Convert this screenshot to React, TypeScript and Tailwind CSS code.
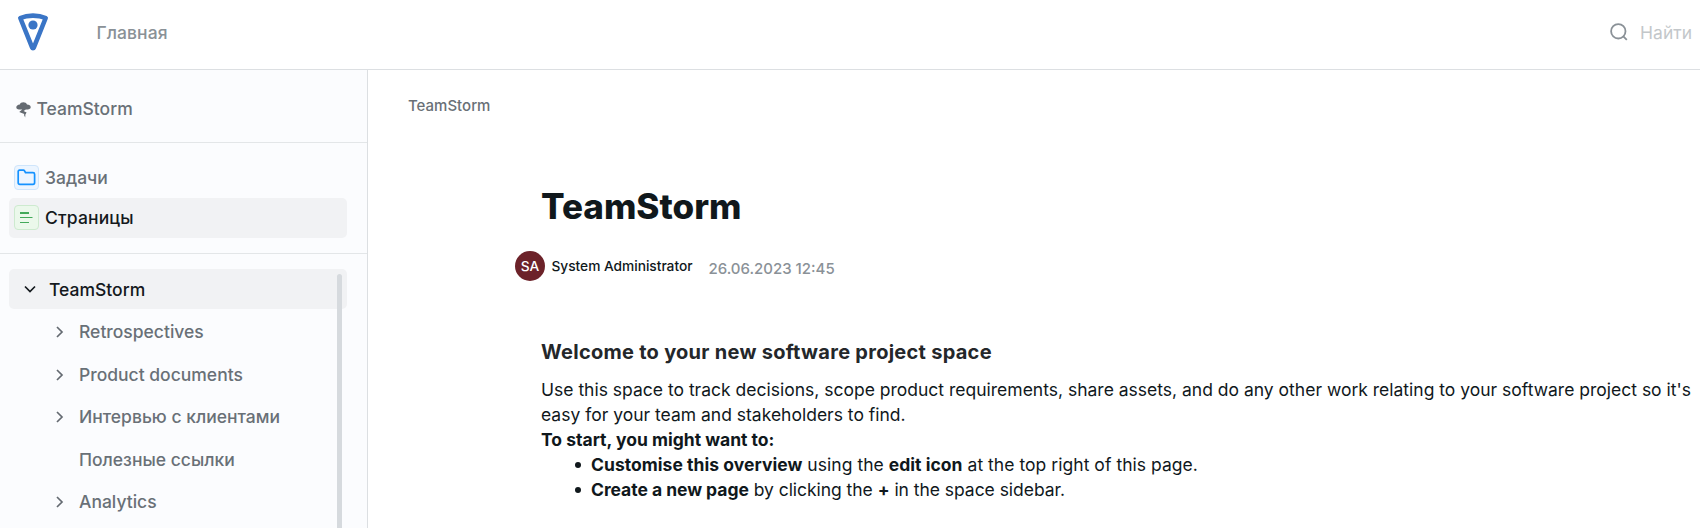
import React from 'react';

const tree = [
  { label: 'Retrospectives', open: true },
  { label: 'Product documents', open: true },
  { label: 'Интервью с клиентами', open: true },
  { label: 'Полезные ссылки', open: false },
  { label: 'Analytics', open: true },
];

function Logo() {
  return (
    <svg width="32" height="40" viewBox="0 0 32 40" fill="none">
      <path d="M3.300 7C10.800 3.800 21.200 3.800 28.700 7L16.800 36.700C16.500 37.500 15.500 37.500 15.200 36.700Z" stroke="#3a75c6" strokeWidth="4.600" strokeLinejoin="round" />
      <circle cx="16" cy="14" r="4.600" fill="#3a75c6" />
    </svg>
  );
}

function StormIcon() {
  return (
    <svg className="mt-[2px]" width="15" height="16" viewBox="0 0 15 16" fill="#646a71">
      <path d="M3.800 2.600C4.200 1 5.600 .3 7.300 .3S10.500 1 11 2.600C13.200 2.700 14.700 3.800 14.700 5.200S13.400 7.400 11.700 7.400H9.800L7.600 9 10.600 10.400 9.400 12.400 9.200 15.600 8 13 8.300 12 3.200 10 6.300 7.400H3C1.300 7.400 .300 6.600 .300 5.300S1.700 2.900 3.800 2.600Z" />
    </svg>
  );
}

function Chevron({ down = false }: { down?: boolean }) {
  return down ? (
    <svg width="12" height="12" viewBox="0 0 12 12" fill="none" stroke="#14191d" strokeWidth="1.7">
      <path d="M1 3.500L6 8.500L11 3.500" />
    </svg>
  ) : (
    <svg width="12" height="12" viewBox="0 0 12 12" fill="none" stroke="#646a71" strokeWidth="1.7">
      <path d="M4 1L9 6L4 11" />
    </svg>
  );
}

function Sidebar() {
  return (
    <aside className="flex w-[368px] shrink-0 flex-col border-r border-[#dcdfe2] bg-[#fbfcfe] text-[17.5px] leading-[26px] font-medium text-[#697077]">
      <div className="flex h-[73px] shrink-0 items-center gap-[5.500px] border-b border-[#e3e6e8] pt-[5px] pl-[16px]">
        <StormIcon />
        <span className="pt-px">TeamStorm</span>
      </div>
      <nav className="flex h-[111px] shrink-0 flex-col border-b border-[#e3e6e8] pt-[15px] pl-[9px]">
        <div className="flex h-[40px] w-[338px] items-start gap-[6px] pt-[7px] pl-[5px]">
          <span className="flex size-[25px] items-center justify-center rounded-[4px] border border-[#cfe5fb] bg-[#ecf5ff]">
            <svg width="19" height="17" viewBox="0 0 19 17" fill="none" stroke="#1592ff" strokeWidth="1.700" strokeLinejoin="round">
              <path d="M1.200 2.500C1.200 1.700 1.700 1.200 2.500 1.200H6.400C7 1.200 7.300 1.500 7.600 2L8.600 3.700H16C17 3.700 17.600 4.200 17.600 5.200V13.500C17.600 14.700 17 15.300 16 15.300H2.800C1.700 15.300 1.200 14.700 1.200 13.700Z" />
            </svg>
          </span>
          <span>Задачи</span>
        </div>
        <div className="flex h-[40px] w-[338px] items-start gap-[6px] rounded-[5px] bg-[#f1f2f4] pt-[7px] pl-[5px] text-[#14191d]">
          <span className="flex size-[25px] items-center justify-center rounded-[4px] border border-[#cdeacf] bg-[#ebf8eb]">
            <svg width="13" height="11" viewBox="0 0 13 11" fill="#43a95a">
              <path d="M0 0H9V2H0ZM0 5H12.500V6H0ZM0 10H9V11H0Z" />
            </svg>
          </span>
          <span className="tracking-[0.15px]">Страницы</span>
        </div>
      </nav>
      <div className="relative flex flex-1 flex-col pt-[15px] pl-[9px]">
        <div className="flex h-[40px] w-[338px] shrink-0 items-center gap-[13px] rounded-[5px] bg-[#f1f2f4] pl-[15px] text-[#14191d]">
          <Chevron down />
          <span className="pt-px">TeamStorm</span>
        </div>
        <div className="flex flex-col pt-[2px]">
          {tree.map((item) => (
            <div key={item.label} className="flex h-[42.500px] items-center gap-[14px] pl-[44px]">
              <span className="flex w-[12px]">{item.open && <Chevron />}</span>
              <span>{item.label}</span>
            </div>
          ))}
        </div>
        <div className="absolute top-[20px] bottom-[-10px] left-[337px] w-[5px] rounded-full bg-[#d6dade]" />
      </div>
    </aside>
  );
}

function Bullet() {
  return <span className="mt-[10px] mr-[8px] size-[6px] shrink-0 rounded-full bg-[#10181c]" />;
}

function Article() {
  return (
    <main className="flex min-w-0 flex-1 flex-col bg-white text-[17.5px] leading-[25px] text-[#10181c]">
      <div className="pt-[24px] pl-[40px] text-[15px] leading-[24px] font-medium text-[#697077]">TeamStorm</div>
      <h1 className="mt-[66px] ml-[173px] text-[35px] leading-[44px] font-extrabold">TeamStorm</h1>
      <div className="mt-[23px] ml-[147px] flex h-[30px] items-center text-[13.75px] font-medium">
        <span className="flex size-[30px] items-center justify-center rounded-full bg-[#6c2229] text-white">SA</span>
        <span className="ml-[6.500px] tracking-[-0.03px]">System Administrator</span>
        <span className="ml-[16px] pt-[5px] text-[15px] text-[#8a9197]">26.06.2023 12:45</span>
      </div>
      <div className="ml-[173px] pt-[57px]">
        <h2 className="text-[20px] leading-[28px] font-bold tracking-[0.27px] text-[#24272a]">Welcome to your new software project space</h2>
        <p className="mt-[11px] whitespace-nowrap">
          Use this space to track decisions, scope product requirements, share assets, and do any other work relating to your software project so it's
          <br />
          easy for your team and stakeholders to find.
        </p>
        <p className="font-bold">To start, you might want to:</p>
        <ul className="pl-[34px]">
          <li className="flex"><Bullet /><span className="pl-[2px] tracking-[0.04px]"><b>Customise this overview</b> using the <b>edit icon</b> at the top right of this page.</span></li>
          <li className="flex"><Bullet /><span className="pl-[2px] tracking-[-0.04px]"><b>Create a new page</b> by clicking the <b>+</b> in the space sidebar.</span></li>
        </ul>
      </div>
    </main>
  );
}

export default function App() {
  return (
    <div className="flex h-[528px] w-[1700px] flex-col overflow-hidden bg-white font-['Inter',sans-serif] [font-optical-sizing:none]">
      <header className="flex h-[70px] shrink-0 items-start border-b border-[#dcdfe2] text-[17.5px] leading-[26px] font-medium">
        <div className="mt-[11px] ml-[17px]"><Logo /></div>
        <span className="mt-[20px] ml-[47.500px] tracking-[0.08px] text-[#8a9197]">Главная</span>
        <div className="mt-[20px] mr-[8px] ml-auto flex items-center gap-[12px] text-[#c3c7ca]">
          <svg className="-mt-[2px]" width="18" height="18" viewBox="0 0 18 18" fill="none" stroke="#8a9197" strokeWidth="1.800">
            <circle cx="8.300" cy="8.300" r="7.200" />
            <path d="M13.300 13.300L16.800 16.800" />
          </svg>
          <span className="font-normal">Найти</span>
        </div>
      </header>
      <div className="flex min-h-0 flex-1">
        <Sidebar />
        <Article />
      </div>
    </div>
  );
}
